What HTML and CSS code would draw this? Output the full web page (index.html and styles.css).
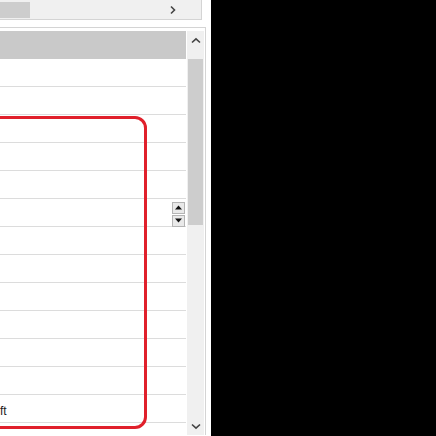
FILE: index.html
```html
<!DOCTYPE html>
<html lang="en">
<head>
  <meta charset="UTF-8">
  <meta name="viewport" content="width=device-width, initial-scale=1.0">
  <title>Grid</title>
  <link rel="stylesheet" href="styles.css">
</head>
<body>
  <div class="pane">
    <div class="hscroll">
      <div class="hthumb"></div>
      <svg class="harrow" width="8" height="10" viewBox="0 0 8 10"><path d="M2 1.5 L5.5 5 L2 8.5" fill="none" stroke="#444" stroke-width="1.6"/></svg>
    </div>

    <div class="frame">
      <div class="grid">
        <div class="head"></div>
        <div class="row"></div>
        <div class="row"></div>
        <div class="row"></div>
        <div class="row"></div>
        <div class="row"></div>
        <div class="row">
          <div class="spinner">
            <div class="spin-btn"><svg width="7" height="5" viewBox="0 0 7 5"><path d="M0 4.5 L3.5 0.5 L7 4.5 Z" fill="#111"/></svg></div>
            <div class="spin-btn"><svg width="7" height="5" viewBox="0 0 7 5"><path d="M0 0.5 L7 0.5 L3.5 4.5 Z" fill="#111"/></svg></div>
          </div>
        </div>
        <div class="row"></div>
        <div class="row"></div>
        <div class="row"></div>
        <div class="row"></div>
        <div class="row"></div>
        <div class="row"></div>
        <div class="row"><span class="cell-text">ft</span></div>
      </div>

      <div class="vscroll">
        <div class="vbtn">
          <svg width="10" height="7" viewBox="0 0 10 7"><path d="M1 5.5 L5 1.8 L9 5.5" fill="none" stroke="#444" stroke-width="1.6"/></svg>
        </div>
        <div class="vthumb"></div>
        <div class="vtrack"></div>
        <div class="vbtn">
          <svg width="10" height="7" viewBox="0 0 10 7"><path d="M1 1.5 L5 5.2 L9 1.5" fill="none" stroke="#444" stroke-width="1.6"/></svg>
        </div>
      </div>
    </div>

    <div class="highlight"></div>
  </div>
</body>
</html>
```

FILE: styles.css
```css
html, body {
  margin: 0;
  padding: 0;
}

body {
  background-color: #000000;
  font-family: "Liberation Sans", Arial, sans-serif;
  font-size: 12px;
  color: #1e1e1e;
  height: 436px;
  overflow: hidden;
}

.pane {
  position: relative;
  width: 211px;
  height: 436px;
  background-color: #ffffff;
  overflow: hidden;
}

.hscroll {
  display: flex;
  align-items: center;
  width: 202px;
  height: 20px;
  padding-top: 1px;
  box-sizing: border-box;
  background-color: #f0f0f0;
  border-right: 1px solid #d4d4d4;
  border-bottom: 1px solid #d4d4d4;
}

.hthumb {
  width: 30px;
  height: 16px;
  background-color: #cdcdcd;
}

.harrow {
  margin-left: auto;
  margin-right: 24px;
}

.frame {
  display: flex;
  margin-top: 7px;
  width: 206px;
  height: 408px;
  box-sizing: border-box;
  padding-top: 3px;
  border-top: 1px solid #d4d4d4;
  border-right: 1px solid #d4d4d4;
}

.grid {
  width: 186px;
  margin-right: 1px;
}

.head {
  height: 28px;
  background-color: #c9c9c9;
}

.row {
  display: flex;
  align-items: center;
  height: 28px;
  box-sizing: border-box;
  border-bottom: 1px solid #dcdcdc;
}

.cell-text {
  padding-top: 5px;
}

.spinner {
  display: flex;
  flex-direction: column;
  gap: 1px;
  margin-left: auto;
  margin-right: 1px;
  margin-top: 3px;
}

.spin-btn {
  display: flex;
  align-items: center;
  justify-content: center;
  width: 13px;
  height: 12px;
  box-sizing: border-box;
  background-color: #e9e9e9;
  border: 1px solid #b4b4b4;
}

.vscroll {
  display: flex;
  flex-direction: column;
  width: 17px;
  background-color: #f0f0f0;
}

.vbtn {
  display: flex;
  align-items: center;
  justify-content: center;
  height: 18px;
}

.vthumb {
  height: 166px;
  margin: 10px 1px 0;
  background-color: #cdcdcd;
}

.vtrack {
  flex: 1;
}

.highlight {
  position: absolute;
  left: -20px;
  top: 116px;
  width: 167px;
  height: 313px;
  box-sizing: border-box;
  border: 3px solid #e0202b;
  border-radius: 12px;
}
```
